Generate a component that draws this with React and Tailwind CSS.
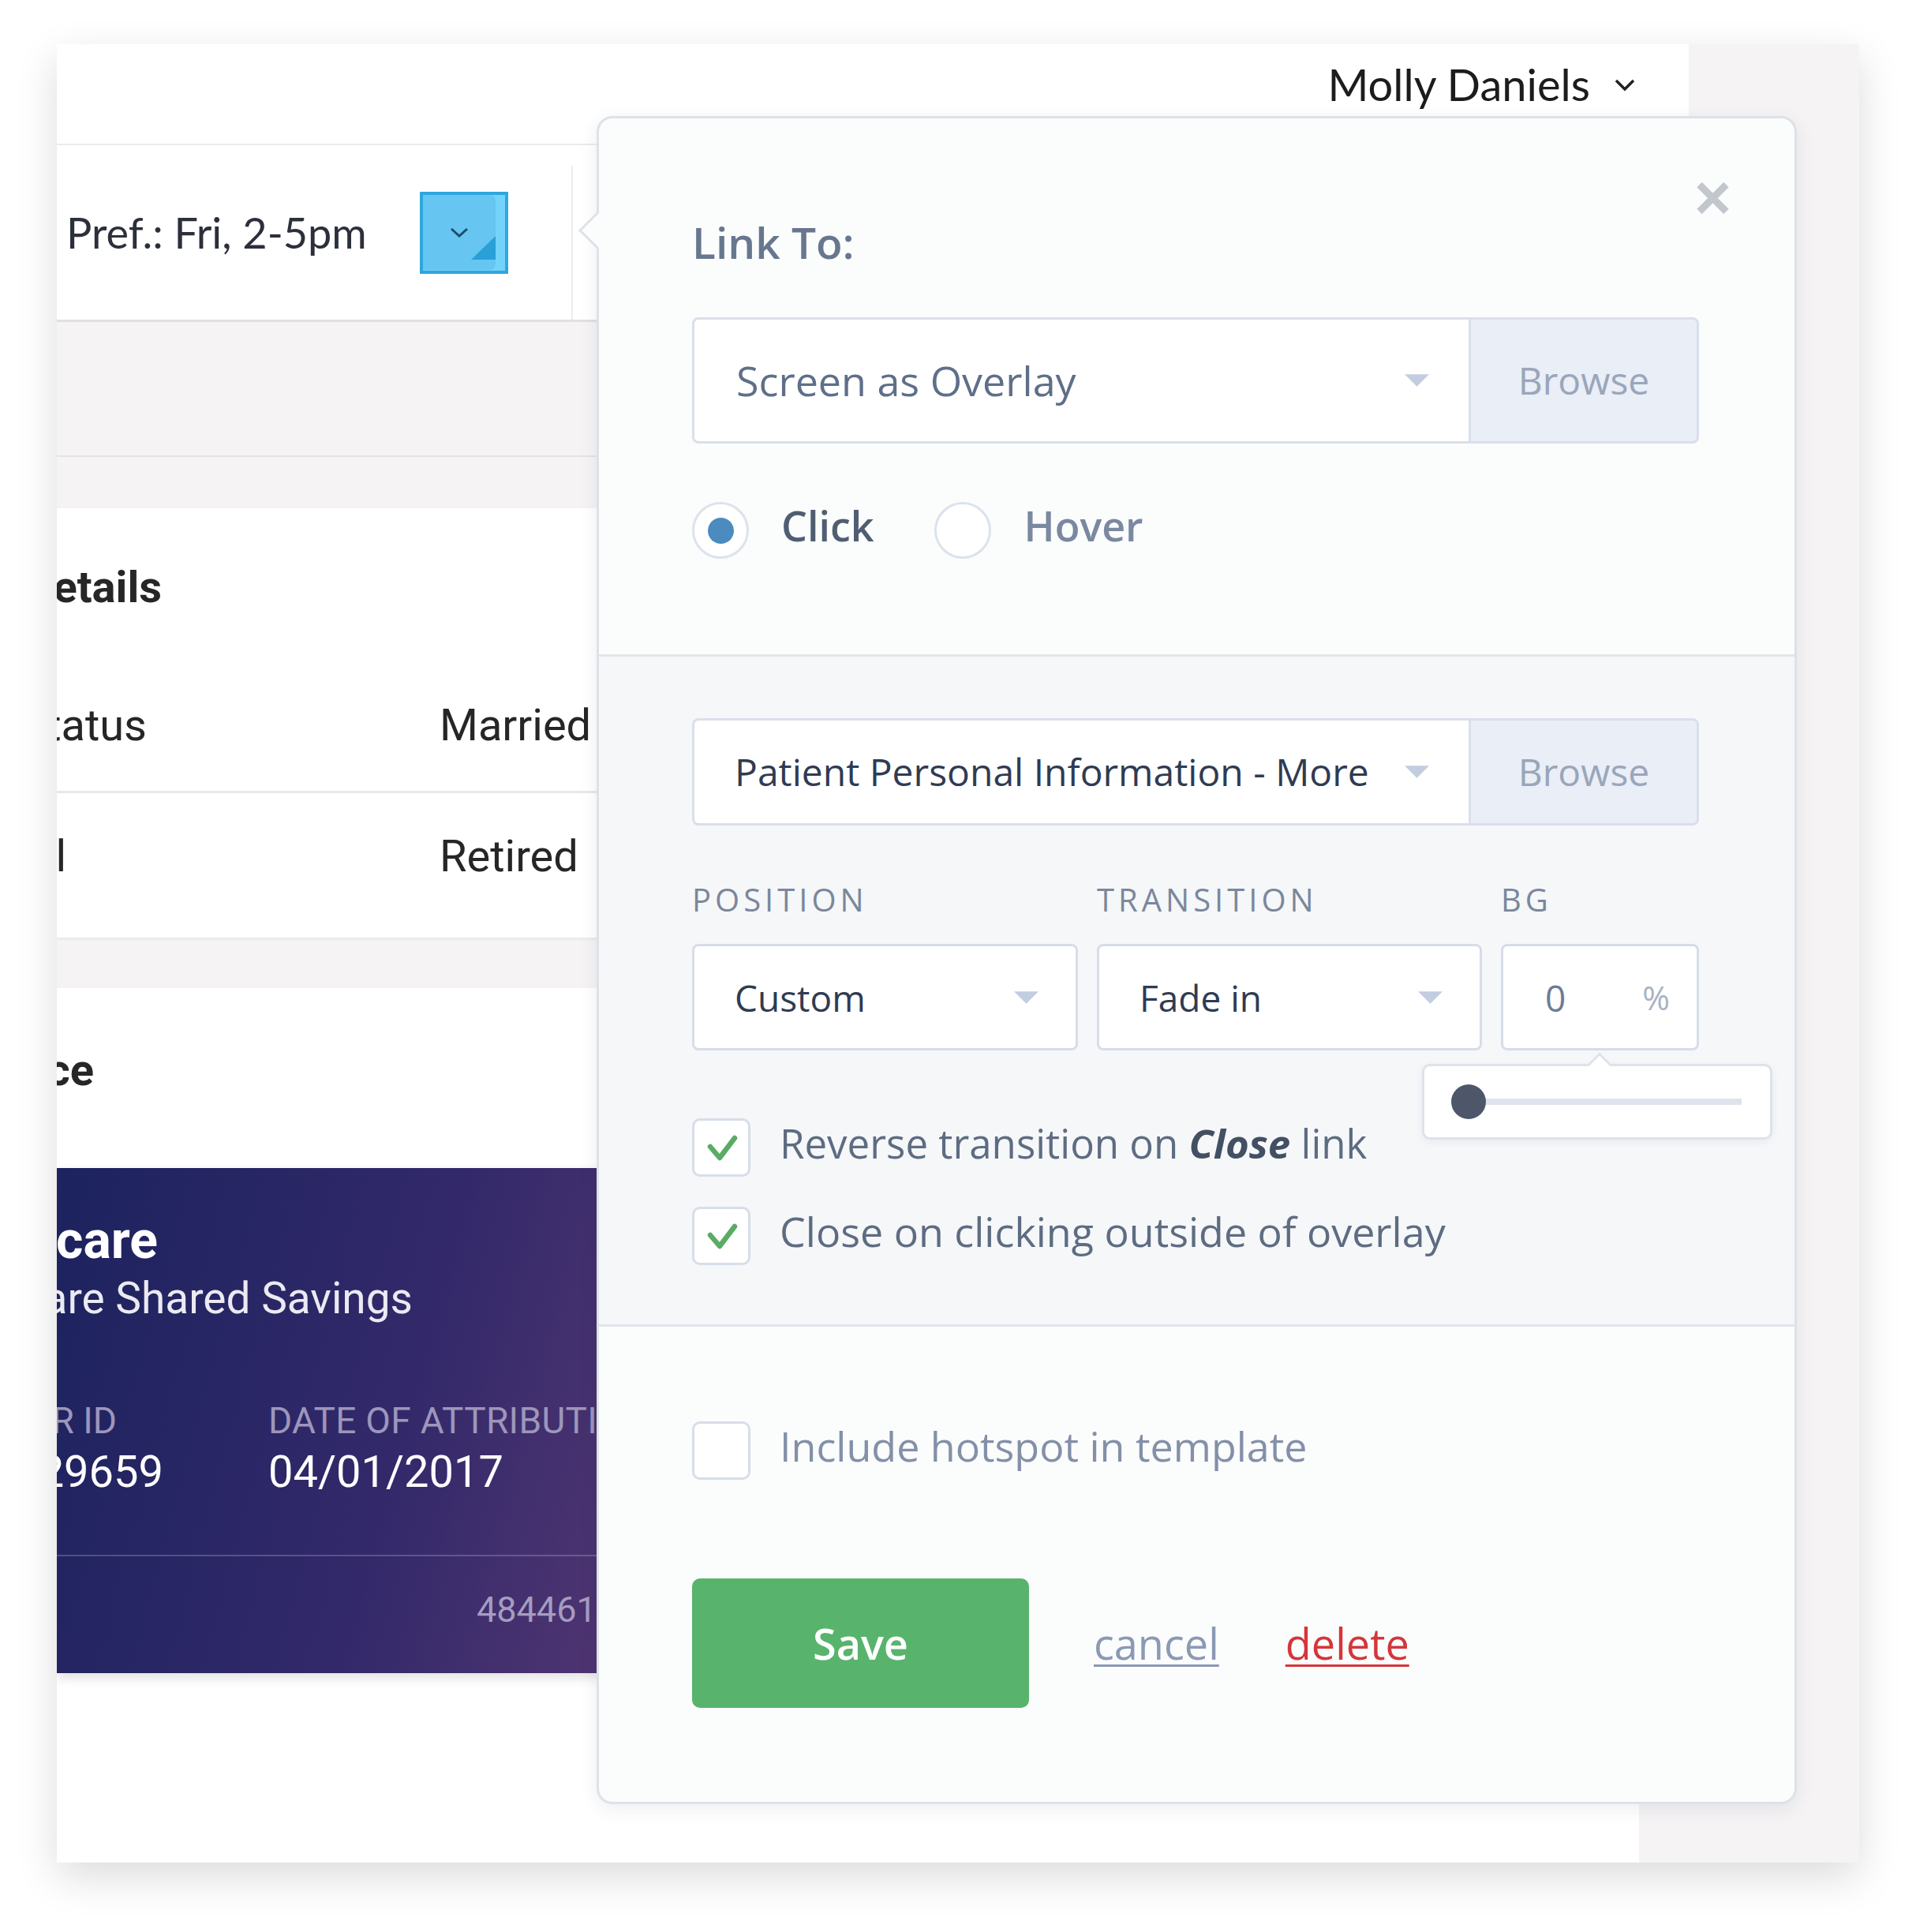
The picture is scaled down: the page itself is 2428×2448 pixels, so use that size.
import React from 'react';

const sans = "font-['Open_Sans',sans-serif]";
const roboto = "font-['Roboto',sans-serif]";
const lato = "font-['Lato',sans-serif]";

function Caret() {
  return (
    <svg viewBox="0 0 32 16" className="w-[31px] h-[16px] flex-none">
      <path d="M0 0h32L16 16z" fill="#c3cde0" />
    </svg>
  );
}

function CheckBox({ checked }) {
  return (
    <div className="w-[74px] h-[74px] flex-none rounded-[10px] border-[3px] border-[#d6dee9] bg-white">
      {checked && (
        <svg viewBox="0 0 68 68" className="w-full h-full">
          <path d="M20 33l12 14 19-25" fill="none" stroke="#5aab64" strokeWidth="6.5" strokeLinecap="round" strokeLinejoin="round" />
        </svg>
      )}
    </div>
  );
}

function Radio({ on }) {
  return (
    <div className="w-[72px] h-[72px] flex-none rounded-full border-[3px] border-[#dbe3ec] bg-white flex items-center justify-center">
      {on && <div className="w-[33px] h-[33px] rounded-full bg-[#4b8bc0]" />}
    </div>
  );
}

// text whose right edge sits at a given x, with the start clipped off-screen
function EndsAt({ w, className = '', children }) {
  return (
    <div className={`flex justify-end whitespace-nowrap ${className}`} style={{ width: w }}>
      <span className="flex-none">{children}</span>
    </div>
  );
}

function Select({ label, textClass, className = '' }) {
  return (
    <div className={`flex items-center justify-between rounded-[8px] border-[3px] border-[#d6dde8] bg-white pl-[51px] pr-[47px] ${className}`}>
      <span className={textClass}>{label}</span>
      <Caret />
    </div>
  );
}

function LinkPopover() {
  return (
    <div className={`absolute left-[684px] top-[91px] w-[1521px] rounded-[20px] border-[3px] border-[#dde2e8] bg-[#fbfcfc] shadow-[0_6px_24px_rgba(30,40,60,0.08)] ${sans}`}>
      <div className="absolute -left-[19px] top-[125px] w-[34px] h-[34px] rotate-45 border-l-[3px] border-b-[3px] border-[#dde2e8] bg-[#fbfcfc]" />

      {/* link target */}
      <div className="relative h-[682px] border-b-[3px] border-[#e1e6ec] pl-[118px] pr-[121px] pt-[130px]">
        <svg viewBox="0 0 44 44" className="absolute left-[1389px] top-[79px] w-[45px] h-[44px]">
          <path d="M5 5l34 34M39 5L5 39" stroke="#c2c7ce" strokeWidth="9" />
        </svg>
        <div className="text-[55px] leading-[54px] font-semibold text-[#68778f]">Link To:</div>
        <div className="mt-[68px] flex h-[160px]">
          <div className="flex-1 flex items-center justify-between rounded-l-[8px] border-[3px] border-r-0 border-[#d9e0ea] bg-white pl-[53px] pr-[50px]">
            <span className="text-[52px] leading-[52px] text-[#5f6f89]">Screen as Overlay</span>
            <Caret />
          </div>
          <div className="w-[292px] flex items-center justify-center rounded-r-[8px] border-[3px] border-[#d9e0ea] bg-[#e9eef7] text-[48px] text-[#9aa6ba]">Browse</div>
        </div>
        <div className="mt-[74px] flex items-center">
          <Radio on />
          <span className="ml-[41px] pb-[12px] text-[52px] leading-[52px] font-semibold text-[#505e73]">Click</span>
          <div className="ml-[76px]"><Radio /></div>
          <span className="ml-[42px] pb-[12px] text-[52px] leading-[52px] font-semibold text-[#7a88a1]">Hover</span>
        </div>
      </div>

      {/* overlay settings */}
      <div className="relative h-[849px] border-b-[3px] border-[#e1e6ec] bg-[#f5f7f9] pl-[118px] pr-[121px] pt-[78px]">
        <div className="flex h-[136px]">
          <div className="flex-1 flex items-center justify-between rounded-l-[8px] border-[3px] border-r-0 border-[#d9e0ea] bg-white pl-[51px] pr-[50px]">
            <span className="text-[48px] leading-[48px] text-[#2f3b52]">Patient Personal Information - More</span>
            <Caret />
          </div>
          <div className="w-[292px] flex items-center justify-center rounded-r-[8px] border-[3px] border-[#d9e0ea] bg-[#e9eef7] text-[48px] text-[#9aa6ba]">Browse</div>
        </div>

        <div className="mt-[74px] grid grid-cols-[489px_488px_251px] gap-x-[24px] text-[40px] leading-[40px] tracking-[5px] text-[#7b879b]">
          <span>POSITION</span>
          <span>TRANSITION</span>
          <span>BG</span>
        </div>
        <div className="mt-[36px] grid h-[135px] grid-cols-[489px_488px_251px] gap-x-[24px]">
          <Select label="Custom" textClass="text-[46px] leading-[46px] text-[#2f3b52]" />
          <Select label="Fade in" textClass="text-[46px] leading-[46px] text-[#2f3b52]" className="pl-[48px]" />
          <div className="flex items-center justify-between rounded-[8px] border-[3px] border-[#d6dde8] bg-white pl-[53px] pr-[34px]">
            <span className="text-[46px] leading-[46px] text-[#6d7b95]">0</span>
            <span className="text-[42px] leading-[42px] text-[#a9b3c4]">%</span>
          </div>
        </div>

        <div className="absolute left-[1043px] top-[516px] z-10 w-[444px] h-[96px] rounded-[10px] border-[3px] border-[#dde3ea] bg-white shadow-[0_3px_12px_rgba(30,40,60,0.06)]">
          <div className="absolute left-[211px] -top-[13px] w-[22px] h-[22px] rotate-45 border-l-[3px] border-t-[3px] border-[#dde3ea] bg-white" />
          <div className="relative flex h-full items-center pl-[34px] pr-[36px]">
            <div className="relative z-10 w-[44px] h-[44px] flex-none rounded-full bg-[#4e5769]" />
            <div className="-ml-[22px] h-[8px] flex-1 bg-[#dfe3eb]" />
          </div>
        </div>

        <div className="mt-[86px] flex flex-col gap-[38px]">
          <div className="flex items-center">
            <CheckBox checked />
            <span className="ml-[37px] pb-[12px] text-[51px] leading-[51px] text-[#5e6c82]">
              Reverse transition on <span className="font-bold italic text-[#434f63]">Close</span> link
            </span>
          </div>
          <div className="flex items-center">
            <CheckBox checked />
            <span className="ml-[37px] pb-[12px] text-[52px] leading-[52px] text-[#5e6c82]">Close on clicking outside of overlay</span>
          </div>
        </div>
      </div>

      {/* actions */}
      <div className="h-[602px] pl-[118px] pt-[120px]">
        <div className="flex items-center">
          <CheckBox />
          <span className="ml-[37px] pb-[12px] text-[52px] leading-[52px] text-[#8390a8]">Include hotspot in template</span>
        </div>
        <div className="mt-[125px] flex items-center">
          <button className="w-[427px] h-[164px] rounded-[10px] bg-[#58b46c] text-[54px] font-semibold text-white">Save</button>
          <a className="ml-[82px] text-[54px] leading-[54px] text-[#8b99b4] underline decoration-[3px] underline-offset-[6px]">cancel</a>
          <a className="ml-[84px] text-[54px] leading-[54px] text-[#d4363a] underline decoration-[3px] underline-offset-[6px]">delete</a>
        </div>
      </div>
    </div>
  );
}

function PatientScreen() {
  return (
    <div className="relative flex w-[2284px] h-[2304px] flex-col overflow-hidden bg-[#f5f3f4] shadow-[0_18px_50px_rgba(0,0,0,0.14)]">
      <div className="flex h-[128px] flex-none">
        <div className={`flex w-[2068px] items-start justify-end border-b-[2px] border-[#ebebeb] bg-white pr-[67px] pt-[24px] ${lato}`}>
          <div className="flex items-center">
            <span className="text-[56px] leading-[54px] text-[#1c1c1c]">Molly Daniels</span>
            <svg viewBox="0 0 28 17" className="ml-[30px] w-[28px] h-[17px]">
              <path d="M3 3l11 11 11-11" fill="none" stroke="#222" strokeWidth="3.5" />
            </svg>
          </div>
        </div>
      </div>

      <div className="flex w-[2005px] flex-1 flex-col">
        <div className="flex h-[224px] flex-none items-center border-b-[3px] border-[#e1e1e1] bg-white">
          <span className={`w-[460px] pl-[12px] text-[54px] leading-[54px] text-[#2b303b] ${lato}`}>Pref.: Fri, 2-5pm</span>
          <div className="w-[112px] h-[104px] flex-none border-[4px] border-[#2fa6dd] bg-[#74d3fb] pr-[12px] pb-[1px]">
            <div className="relative flex h-full items-center justify-center rounded-r-[8px] bg-[#66c6f1]">
              <svg viewBox="0 0 24 13" className="w-[24px] h-[13px]">
                <path d="M2 2l10 9 10-9" fill="none" stroke="#1d4b6b" strokeWidth="3" />
              </svg>
              <svg viewBox="0 0 31 30" className="absolute right-0 bottom-[13px] w-[31px] h-[30px]">
                <path d="M0 30L31 0v30z" fill="#2a9fd8" />
              </svg>
            </div>
          </div>
          <div className="ml-[80px] h-[195px] w-[2px] self-end bg-[#ececec]" />
        </div>
        <div className="h-[171px] flex-none border-b-[2px] border-[#e4e4e4]" />
        <div className="h-[65px] flex-none" />

        <div className={`h-[544px] flex-none bg-white pt-[72px] text-[#262626] shadow-[0_2px_4px_rgba(0,0,0,0.06)] ${roboto}`}>
          <EndsAt w={133} className="text-[56px] leading-[56px] font-bold">Details</EndsAt>
          <div className="mt-[119px] flex border-b-[3px] border-[#e8e8e8] pb-[55px] text-[56px] leading-[56px]">
            <EndsAt w={485}><span className="pr-[371px]">Marital Status</span></EndsAt>
            <span>Married</span>
          </div>
          <div className="flex pt-[52px] text-[56px] leading-[56px]">
            <EndsAt w={485}><span className="pr-[473px]">Occupational</span></EndsAt>
            <span>Retired</span>
          </div>
        </div>

        <div className="h-[64px] flex-none" />

        <div className={`flex-1 bg-white pt-[76px] ${roboto}`}>
          <EndsAt w={47} className="text-[56px] leading-[56px] font-bold text-[#262626]">Insurance</EndsAt>
          <div className="mt-[96px] h-[640px] w-[1000px] bg-[linear-gradient(105deg,#1c235e_0%,#33296a_45%,#553773_80%)] pt-[59px] text-white shadow-[0_6px_14px_rgba(0,0,0,0.12)]">
            <EndsAt w={128} className="text-[66px] leading-[66px] font-bold">Medicare</EndsAt>
            <EndsAt w={451} className="mt-[13px] text-[55px] leading-[55px] text-[#ebe9f2]">Medicare Shared Savings</EndsAt>
            <div className="mt-[104px] flex">
              <div className="w-[268px] flex-none">
                <EndsAt w={76} className="text-[46px] leading-[46px] text-[#9d96bb]">MEMBER ID</EndsAt>
                <EndsAt w={135} className="mt-[14px] text-[56px] leading-[56px]">1EG429659</EndsAt>
              </div>
              <div className="whitespace-nowrap">
                <div className="text-[46px] leading-[46px] tracking-[0.3px] text-[#9d96bb]">DATE OF ATTRIBUTION</div>
                <div className="mt-[14px] text-[56px] leading-[56px]">04/01/2017</div>
              </div>
            </div>
            <div className="mt-[77px] h-[2px] bg-white/20" />
            <div className="mt-[46px] pl-[532px] text-[45px] leading-[44px] text-[#a49dc0]">484461 2093</div>
          </div>
        </div>
      </div>

      <LinkPopover />
    </div>
  );
}

export default function App() {
  return (
    <div className="w-[2428px] h-[2448px] bg-white pl-[72px] pt-[56px]">
      <PatientScreen />
    </div>
  );
}
